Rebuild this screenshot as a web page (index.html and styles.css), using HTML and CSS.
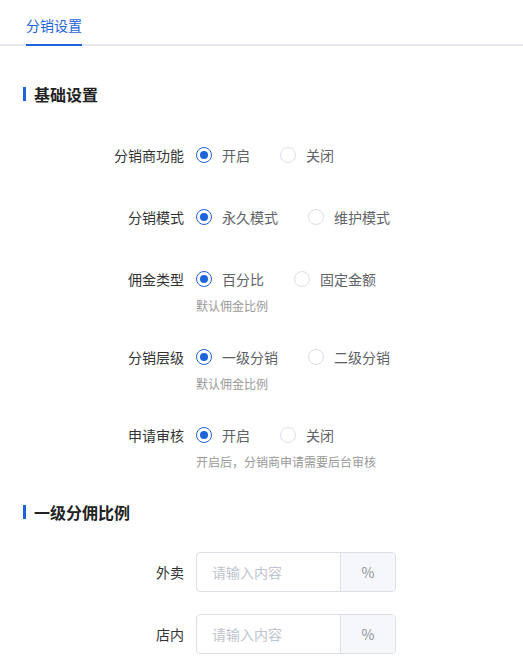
FILE: index.html
```html
<!DOCTYPE html>
<html lang="zh-CN">
<head>
<meta charset="utf-8">
<title>分销设置</title>
<link rel="stylesheet" href="styles.css">
</head>
<body>
<div class="tabs">
  <div class="tab active">分销设置</div>
</div>
<div class="content">
  <section class="section">
    <h2 class="section-title">基础设置</h2>
    <div class="form">
      <div class="item">
        <div class="label">分销商功能</div>
        <div class="control">
          <div class="radios">
            <span class="radio checked"><i></i>开启</span>
            <span class="radio"><i></i>关闭</span>
          </div>
        </div>
      </div>
      <div class="item">
        <div class="label">分销模式</div>
        <div class="control">
          <div class="radios">
            <span class="radio checked"><i></i>永久模式</span>
            <span class="radio"><i></i>维护模式</span>
          </div>
        </div>
      </div>
      <div class="item has-hint">
        <div class="label">佣金类型</div>
        <div class="control">
          <div class="radios">
            <span class="radio checked"><i></i>百分比</span>
            <span class="radio"><i></i>固定金额</span>
          </div>
          <div class="hint">默认佣金比例</div>
        </div>
      </div>
      <div class="item has-hint">
        <div class="label">分销层级</div>
        <div class="control">
          <div class="radios">
            <span class="radio checked"><i></i>一级分销</span>
            <span class="radio"><i></i>二级分销</span>
          </div>
          <div class="hint">默认佣金比例</div>
        </div>
      </div>
      <div class="item has-hint">
        <div class="label">申请审核</div>
        <div class="control">
          <div class="radios">
            <span class="radio checked"><i></i>开启</span>
            <span class="radio"><i></i>关闭</span>
          </div>
          <div class="hint">开启后，分销商申请需要后台审核</div>
        </div>
      </div>
    </div>
  </section>
  <section class="section">
    <h2 class="section-title">一级分佣比例</h2>
    <div class="form form-inputs">
      <div class="item input-item">
        <div class="label">外卖</div>
        <div class="control">
          <div class="input-group">
            <span class="input">请输入内容</span>
            <span class="addon">%</span>
          </div>
        </div>
      </div>
      <div class="item input-item">
        <div class="label">店内</div>
        <div class="control">
          <div class="input-group">
            <span class="input">请输入内容</span>
            <span class="addon">%</span>
          </div>
        </div>
      </div>
    </div>
  </section>
</div>
</body>
</html>
```
FILE: styles.css
```css
* { box-sizing: border-box; }
body {
  margin: 0;
  background: #fff;
  font-family: "Noto Sans CJK SC", "Noto Sans", sans-serif;
  font-size: 14px;
  color: #333;
}
.tabs {
  display: flex;
  padding-left: 26px;
  border-bottom: 2px solid #e4e7ed;
}
.tab {
  padding: 11px 0 5px;
  line-height: 28px;
  font-size: 14px;
  color: #1e63db;
  border-bottom: 2px solid #1e63db;
  margin-bottom: -2px;
}
.content {
  padding: 36px 0 0 23px;
}
.section + .section {
  margin-top: 32px;
}
.section-title {
  margin: 0;
  display: flex;
  align-items: center;
  gap: 8px;
  font-size: 16px;
  font-weight: 700;
  line-height: 24px;
  color: #222;
}
.section-title::before {
  content: "";
  width: 3px;
  height: 14px;
  background: #1e63db;
}
.form {
  margin-top: 33px;
}
.form-inputs {
  margin-top: 28px;
}
.item {
  display: flex;
  margin-bottom: 30px;
}
.item.has-hint {
  margin-bottom: 29px;
}
.item.input-item {
  margin-bottom: 22px;
}
.item:last-child {
  margin-bottom: 0;
}
.label {
  width: 173px;
  padding-right: 12px;
  text-align: right;
  line-height: 32px;
  color: #333;
  flex-shrink: 0;
}
.input-item .label {
  line-height: 40px;
}
.radios {
  display: flex;
  align-items: center;
  height: 32px;
}
.radio {
  display: flex;
  align-items: center;
  margin-right: 30px;
  color: #606266;
  line-height: 32px;
}
.radio i {
  width: 16px;
  height: 16px;
  border: 1px solid #dcdfe6;
  border-radius: 50%;
  margin-right: 10px;
  display: flex;
  align-items: center;
  justify-content: center;
}
.radio.checked i {
  border-color: #1e63db;
}
.radio.checked i::after {
  content: "";
  width: 8px;
  height: 8px;
  border-radius: 50%;
  background: #1e63db;
}
.hint {
  margin-top: 5px;
  font-size: 12px;
  line-height: 12px;
  color: #999;
}
.input-group {
  display: flex;
  width: 200px;
  height: 40px;
  border: 1px solid #dcdfe6;
  border-radius: 4px;
  overflow: hidden;
}
.input {
  flex: 1;
  padding-left: 15px;
  line-height: 38px;
  color: #c0c4cc;
}
.addon {
  width: 55px;
  border-left: 1px solid #dcdfe6;
  background: #f5f7fa;
  color: #909399;
  text-align: center;
  line-height: 38px;
}
```
